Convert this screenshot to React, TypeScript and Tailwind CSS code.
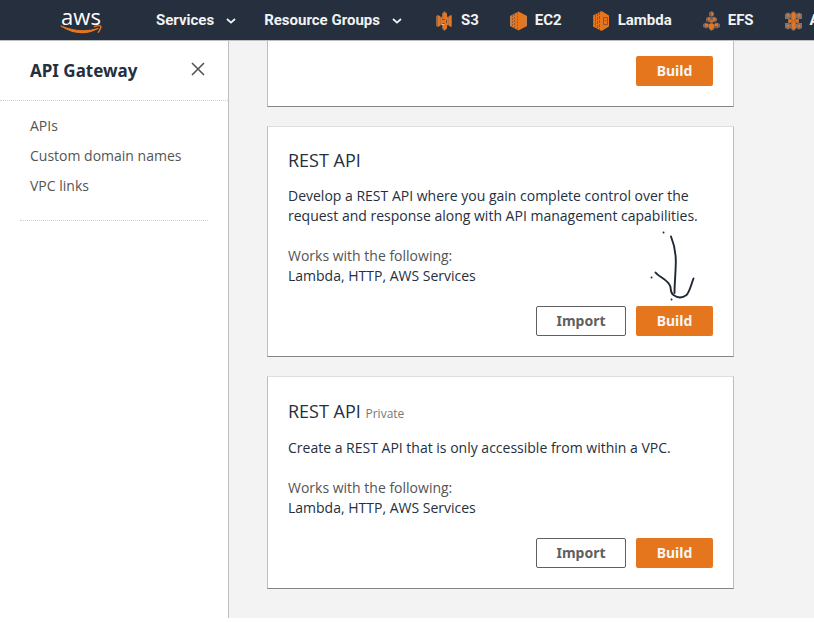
import type { ReactNode } from "react";

function AwsLogo() {
  return (
    <a href="#home" aria-label="AWS home" className="flex w-10 shrink-0 flex-col items-center text-white">
      <span className="font-['Open_Sans',sans-serif] text-[22px] leading-5 font-medium">aws</span>
      <svg viewBox="0 0 42 10" className="-mt-px h-[10px] w-[42px]" fill="none">
        <path d="M1 1Q20 13 38 3.500Q20 9 1 1z" fill="#e5761e" stroke="#e5761e" strokeWidth="1.2" strokeLinejoin="round" />
        <path d="M34.500 1.500C38 .6 40.500.7 40.800 1.300S40 5 38.300 7.200" stroke="#e5761e" strokeWidth="1.4" strokeLinecap="round" />
      </svg>
    </a>
  );
}

function Chevron() {
  return (
    <svg viewBox="0 0 10 6" className="h-[6px] w-[10px]" fill="none" stroke="#f2f2f2" strokeWidth="1.8">
      <path d="M1 1l4 3.600L9 1" />
    </svg>
  );
}

function S3Icon() {
  return (
    <svg viewBox="0 0 17 20" className="h-5 w-[17px]">
      <path d="M0 5l2-1v12l-2-1zM14.500 4l1.500.5v11l-1.500.5z" fill="#8c6a55" />
      <path d="M2 4l2.500 1.500v9L2 16zM12.500 5.500L15 4v12l-2.500-1.500z" fill="#e5761e" />
      <path d="M4 6l2-.5V2.500L8.500 0 11 2.500v3l2 .5v8l-2 .5v3L8.500 20 6 17.500v-3L4 14z" fill="#8c6a55" />
      <path d="M8.500 1L11 3v3.500l1.500.5v6.500L11 14v3l-2.500 2L7 17v-3l-2.500-.5V7L7 6.500V3z" fill="#e5761e" />
      <path d="M6 8.500h3M10.500 9v3M6.500 12.500h2" stroke="#7a4a30" />
      <path d="M6 13.500h2" stroke="#d6cfc8" />
    </svg>
  );
}

function Ec2Icon() {
  return (
    <svg viewBox="0 0 17 20" className="h-5 w-[17px]">
      <path d="M0 5l8.500-4.500L17 5v10l-8.500 4.500L0 15z" fill="#e5761e" />
      <path d="M2.500 4v12M4.500 3v14M7.500 1.500v17" stroke="#9c5a30" strokeDasharray="2 1" />
      <path d="M.5 5v10M16.500 5v10" stroke="#b9835c" />
    </svg>
  );
}

function LambdaIcon() {
  return (
    <svg viewBox="0 0 17 20" className="h-5 w-[17px]">
      <path d="M0 4.500L8.500 0 16 4.500v11L8.500 20 0 15.500z" fill="#e5761e" />
      <path d="M2.500 3.500v13M4.500 2v16M6.500 1v18" stroke="#8c5438" strokeDasharray="3 1" />
      <path d="M10.500 6.500h4v7h-4z" fill="none" stroke="#8c5438" />
      <path d="M12 9.500h1" stroke="#704d40" />
      <path d="M.5 4.500v11" stroke="#9a7660" />
    </svg>
  );
}

function EfsIcon() {
  return (
    <svg viewBox="0 0 17 20" className="h-5 w-[17px]">
      <path d="M8.500 0L11 1.500v3L8.500 6 6 4.500v-3zM3 7l3-1.500 2.500 1 2.500-1L14 7v3l-3 1.500-2.500-1-2.500 1L3 10zM0 13l3-1.500L6 13l2.500-1.500L11 13l3-1.500 3 1.500v3l-3 1.500-2.500-1V18L8.500 20 6 18v-1.500l-3 1L0 16z" fill="#806458" />
      <path d="M8.500 1l1.500 1v2.500H8.500zM5 7l1.500-.5L7 9H5zM10 7h2.500v2.500H10zM7 9.500h3v2H7zM2 13h3v2.500H2zM6 13.500l2.500-1 2.500 1v3L8.500 19 6 17zM12 12.500h3V15h-3z" fill="#e5761e" />
    </svg>
  );
}

function ApiGatewayIcon() {
  return (
    <svg viewBox="0 0 17 20" className="h-5 w-[17px]">
      <path d="M0 3l3-1.500L6 3v4l-2 1H0zM11 3l3-1.500L17 3v5h-4l-2-1zM0 12h4l2 1v4l-3 1.500L0 17zM13 12h4v5l-3 1.500-3-1.500v-4z" fill="#86706a" />
      <path d="M6 2l2.500-2L11 2v6h3v4h-3v6l-2.500 2L6 18v-6H3V8h3z" fill="#a46840" />
      <path d="M8 1.500L10.500 3v4L9 9.500l1.500 3V17L8 18.500l-1-2V13l1-3-1-3V3zM2 3.500h2v2H2zM13 3.500h2v2h-2zM3.500 9h3v2h-3zM11 9h2.500v2H11zM2 14h2v2H2zM13 14h2v2h-2z" fill="#e5761e" />
    </svg>
  );
}

function Shortcut({ icon, children }: { icon: ReactNode; children: ReactNode }) {
  return (
    <a href="#service" className="flex shrink-0 items-center gap-2 whitespace-nowrap">
      {icon}
      {children}
    </a>
  );
}

function TopBar() {
  return (
    <header className="flex h-10 items-center overflow-hidden bg-[#252f3e] pl-[61px] font-['Roboto',sans-serif] text-[15px] font-bold text-[#f2f2f2]">
      <AwsLogo />
      <nav className="ml-[55px] flex shrink-0 items-center pt-[2px]">
        <button className="flex items-center gap-3 whitespace-nowrap">Services <Chevron /></button>
        <button className="ml-7 flex items-center gap-3 whitespace-nowrap">Resource Groups <Chevron /></button>
        <div className="ml-[34px] flex items-center gap-[31px]">
          <Shortcut icon={<S3Icon />}>S3</Shortcut>
          <Shortcut icon={<Ec2Icon />}>EC2</Shortcut>
          <Shortcut icon={<LambdaIcon />}>Lambda</Shortcut>
          <Shortcut icon={<EfsIcon />}>EFS</Shortcut>
          <Shortcut icon={<ApiGatewayIcon />}>API Gateway</Shortcut>
        </div>
      </nav>
    </header>
  );
}

function Sidebar() {
  return (
    <aside className="w-[229px] shrink-0 border-r border-[#bfbfbf] bg-white">
      <div className="flex h-[60px] items-center justify-between border-b border-dotted border-[#d0d0d0] pt-[2px] pr-[23px] pl-[30px]">
        <h1 className="font-['Noto_Sans',sans-serif] text-[17px] font-bold text-[#252f3e]">API Gateway</h1>
        <button aria-label="Close" className="pb-[6px]">
          <svg viewBox="0 0 14 14" className="size-[14px]" stroke="#545454" strokeWidth="1.6">
            <path d="M1 1l12 12M13 1L1 13" />
          </svg>
        </button>
      </div>
      <nav className="mx-5 flex flex-col gap-[10px] border-b border-dotted border-[#d0d0d0] px-[10px] pt-[15px] pb-6 text-[#545454]">
        <a href="#apis">APIs</a>
        <a href="#domains">Custom domain names</a>
        <a href="#vpc">VPC links</a>
      </nav>
    </aside>
  );
}

const buttonText = "h-[30px] rounded-xs font-['Noto_Sans',sans-serif] font-bold";

function BuildButton() {
  return <button className={`${buttonText} w-[77px] bg-[#e5761e] text-[#f5f5f5]`}>Build</button>;
}

function ImportButton() {
  return <button className={`${buttonText} w-[90px] border border-[#606060] bg-white text-[#606060]`}>Import</button>;
}

function DrawnArrow() {
  return (
    <svg viewBox="0 0 60 80" className="absolute bottom-full left-2 h-20 w-[60px]" fill="none" stroke="#1f2735" strokeWidth="1.9" strokeLinecap="round">
      <path d="M27 10.500C30.500 19 32 26 31.800 37 31.500 50 30.500 58 30.500 67" />
      <path d="M11.500 46.500C15 51 25 54 26.500 61c.5 4 0 6 3 8 4 3 9 3 13 0 3-3 4.500-10 7-16.500" />
      <path d="M19.500 6.500h.1M7.500 51.500h.1M27.500 73.500h.1" strokeWidth="1.800" />
    </svg>
  );
}

interface ApiCardProps {
  tag?: string;
  description: string;
  annotated?: boolean;
}

const cardFrame = "border border-t-[#dedede] border-r-[#bdbdbd] border-b-[#858585] border-l-[#bdbdbd] bg-white px-5 pb-5";

function ApiCard({ tag, description, annotated }: ApiCardProps) {
  return (
    <section className={`${cardFrame} pt-5`}>
      <h2 className={tag ? "text-lg leading-[29px]" : "text-lg leading-[27px]"}>
        REST API {tag && <small className="text-xs text-[#777]">{tag}</small>}
      </h2>
      <p className="mt-3">{description}</p>
      <p className="mt-5 text-[#545454]">Works with the following:</p>
      <p>Lambda, HTTP, AWS Services</p>
      <div className="mt-5 flex justify-end gap-[10px]">
        <ImportButton />
        <div className="relative">
          <BuildButton />
          {annotated && <DrawnArrow />}
        </div>
      </div>
    </section>
  );
}

export default function App() {
  return (
    <div className="bg-white font-['Open_Sans',sans-serif] text-sm text-[#252f3e]">
      <TopBar />
      <div className="flex border-t border-[#bfbfbf] bg-[#f3f3f3]">
        <Sidebar />
        <main className="flex min-w-0 grow flex-col gap-[19px] pr-20 pb-[29px] pl-[38px]">
          <section className={`${cardFrame} flex justify-end border-t-0 pt-[15px]`}>
            <BuildButton />
          </section>
          <ApiCard
            description="Develop a REST API where you gain complete control over the request and response along with API management capabilities."
            annotated
          />
          <ApiCard tag="Private" description="Create a REST API that is only accessible from within a VPC." />
        </main>
      </div>
    </div>
  );
}
